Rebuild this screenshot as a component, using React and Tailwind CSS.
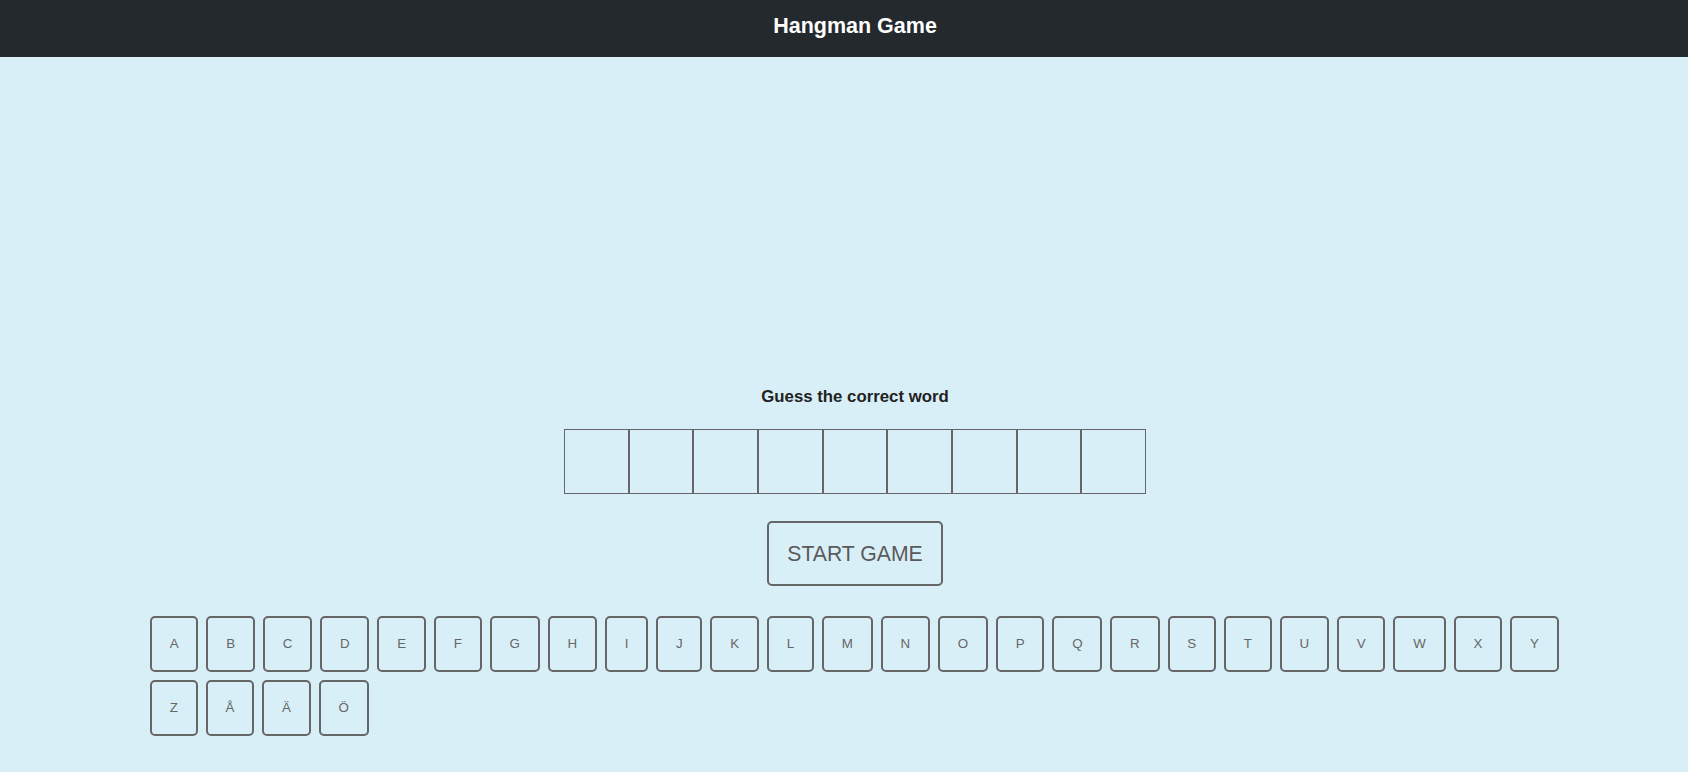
import React from "react";

const LETTERS = ["A","B","C","D","E","F","G","H","I","J","K","L","M","N","O","P","Q","R","S","T","U","V","W","X","Y","Z","Å","Ä","Ö"];

export default function App() {
  return (
    <div className="w-full min-h-screen overflow-x-hidden bg-[#d9eff8]" style={{ fontFamily: '"Liberation Sans", Arial, sans-serif' }}>
      <div className="w-[1710px] flex flex-col">
        <header className="h-[57px] bg-[#24292d] flex items-center justify-center pb-[4px]">
          <h1 className="text-white font-bold text-[21.5px] leading-none">Hangman Game</h1>
        </header>
        <main className="flex flex-col items-center">
          <div className="h-[330px] w-full" />
          <h2 className="h-[20px] leading-[20px] text-[16.8px] font-bold text-[#222]">Guess the correct word</h2>
          <div className="mt-[22px] flex">
            {Array.from({ length: 9 }).map((_, i) => (
              <div key={i} className="w-[64.67px] h-[65px] border border-[#666]" />
            ))}
          </div>
          <button className="mt-[27px] h-[65px] px-[18px] border-2 border-[#666] rounded-[5px] text-[21.2px] text-[#5a5a5a] leading-none">
            START GAME
          </button>
          <div className="mt-[26px] self-start ml-[146px] w-[1430px] flex flex-wrap">
            {LETTERS.map((l) => (
              <button key={l} className="m-[4px] h-[56px] px-[17.8px] border-2 border-[#666] rounded-[5px] text-[13.33px] text-[#666] leading-none">
                {l}
              </button>
            ))}
          </div>
        </main>
      </div>
    </div>
  );
}
